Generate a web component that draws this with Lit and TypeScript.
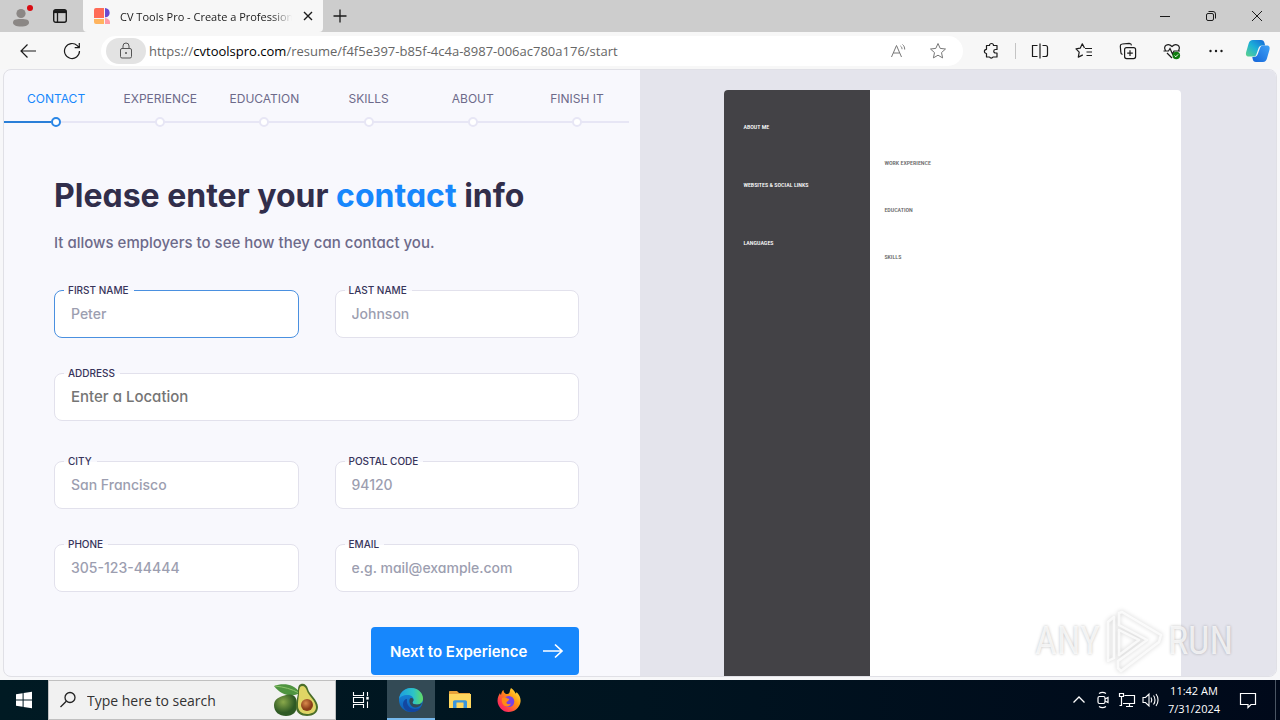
import { LitElement, html, css, svg } from "lit";
import { customElement, property } from "lit/decorators.js";
import { classMap } from "lit/directives/class-map.js";

const icon = (w: number, h: number, body: unknown) =>
  html`<svg width=${w} height=${h} viewBox="0 0 ${w} ${h}" fill="none" stroke="currentColor" aria-hidden="true">${body}</svg>`;

const icons = {
  profile: icon(24, 26, svg`
    <circle cx="11" cy="10.500" r="4.600" fill="#8b8785" stroke="none"/>
    <path d="M3 19.500c0-2.500 2-3.500 8-3.500s8 1 8 3.500-3 4-8 4-8-1.500-8-4z" fill="#8b8785" stroke="none"/>
    <circle cx="20" cy="5" r="3" fill="#d90b12" stroke="none"/>`),
  tabActions: icon(16, 16, svg`
    <rect x="1.7" y="1.7" width="12.6" height="12.6" rx="2" stroke-width="1.4"/>
    <path d="M2 3.6h12" stroke-width="3"/><path d="M5.5 4v10" stroke-width="1.3"/>`),
  favicon: icon(16, 16, svg`
    <g stroke="none"><path d="M0 2a2 2 0 0 1 2-2h8v10H0z" fill="#ff6b57"/>
    <path d="M0 11h10v5H2a2 2 0 0 1-2-2z" fill="#ffb45e"/>
    <path d="M11 0a5 4.700 0 0 1 1 9.200h-1z" fill="#6a4bd0"/>
    <path d="M11 10a5 5 0 0 1 5 6h-5z" fill="#ff9ba8"/></g>`),
  close: icon(12, 12, svg`<path d="M2 2l8 8M10 2l-8 8" stroke-width="1.4"/>`),
  plus: icon(16, 16, svg`<path d="M8 1.500v13M1.500 8h13" stroke-width="1.3"/>`),
  minimize: icon(12, 12, svg`<path d="M1 6.500h10"/>`),
  restore: icon(12, 12, svg`<rect x="1.500" y="3.500" width="7" height="7" rx="1.5"/><path d="M3.500 1.500h4.500a2.500 2.500 0 0 1 2.500 2.500v4.500"/>`),
  winClose: icon(12, 12, svg`<path d="M1 1l10 10M11 1L1 11"/>`),
  back: icon(18, 16, svg`<path d="M17 8H2M8.500 1.500L2 8l6.500 6.500" stroke-width="1.2"/>`),
  refresh: icon(18, 18, svg`<path d="M16.500 9A7.500 7.500 0 1 1 14.300 3.700L16 5.400M16.300 1v4.600h-4.600" stroke-width="1.2"/>`),
  lock: icon(14, 18, svg`<rect x="1.500" y="6.500" width="11" height="9.500" rx="1.500"/><path d="M4 6.500V4a3 3 0 0 1 6 0v2.500"/><circle cx="7" cy="11" r="1" fill="currentColor" stroke="none"/>`),
  readAloud: icon(18, 18, svg`<path d="M1.500 15L6.500 3.500l5 11.500M3.300 11h6.400"/><path d="M10.500 4c1 .8 1.500 1.800 1.500 3.200M12.500 2.500c1.500 1.200 2.200 2.800 2.200 5"/>`),
  star: icon(18, 18, svg`<path d="M9 1.500l2.200 4.900 5.300.6-4 3.600 1.100 5.300L9 13.200l-4.600 2.700 1.100-5.300-4-3.600 5.300-.6z" stroke-linejoin="round"/>`),
  extension: icon(18, 18, svg`<path d="M5 3.500h2.500a2 2 0 0 1 4 0H15v4h-1.500a1.700 1.700 0 0 0 0 3.500H15v4h-4a2 2 0 0 1-3.500 0H4.500v-3.500a2.100 2.100 0 0 1 0-4.200V3.500z" stroke-width="1.200" stroke-linejoin="round"/>`),
  split: icon(18, 18, svg`<path d="M6.500 3.500H1.500v11h5M11.500 3.500h3a2 2 0 0 1 2 2v7a2 2 0 0 1-2 2h-3M9 1.500v15" stroke-width="1.200"/>`),
  favorites: icon(18, 18, svg`<path d="M10 6.500h7M11.500 10H17M11.500 13.500H17M9.500 6L7.300 1.800 5.200 6.200l-4.200.6 3.200 3.300-.9 5 4.500-2.200" stroke-width="1.200" stroke-linejoin="round"/>`),
  collections: icon(18, 18, svg`<rect x="5.600" y="5.600" width="11" height="11" rx="2" stroke-width="1.200"/><path d="M11 8.300v5.600M8.200 11.100h5.600M3.500 12.500A2.500 2.500 0 0 1 1.800 10L1.300 4a2 2 0 0 1 1.900-2l7-.7a2.300 2.300 0 0 1 2.300 2" stroke-width="1.200"/>`),
  essentials: icon(18, 18, svg`<path d="M2.500 8.500C-.5 4 5 .5 9 4.500c4-4 9.500-.5 6.500 4M4 11l5 5M0.500 9h5l1.500-2.500L9.500 12l1.500-3h6" stroke-width="1.200"/><circle cx="13.300" cy="13.500" r="3.800" fill="#107c10" stroke="none"/><path d="M11.600 13.600l1.200 1.200 2.300-2.400" stroke="#fff"/>`),
  more: icon(18, 18, svg`<g fill="currentColor" stroke="none"><circle cx="3.500" cy="9" r="1.200"/><circle cx="9" cy="9" r="1.200"/><circle cx="14.500" cy="9" r="1.200"/></g>`),
  copilot: icon(26, 26, svg`
    <defs><linearGradient id="cp1" x1="0" y1="1" x2="1" y2="0"><stop stop-color="#5fd38a"/><stop offset=".5" stop-color="#1cb0d8"/><stop offset="1" stop-color="#1565d8"/></linearGradient>
    <linearGradient id="cp2" x1="0" y1="1" x2="1" y2="0"><stop stop-color="#1464d8"/><stop offset="1" stop-color="#3ea2f7"/></linearGradient></defs>
    <g stroke="none"><path d="M8 2h8c2 0 3 1 3.500 3l.6 2.500h-3c-2 0-3 1-3.700 3L11.500 16c-.6 2-1.500 2.500-3 2.500H4c-3 0-3.500-2-2.800-4.500l2.300-8C4.200 3.300 5.500 2 8 2z" fill="url(#cp1)"/>
    <path d="M18 24h-7c-2 0-3-1-3.300-3L7.300 19h1.500c2 0 3.300-1 4-3l2-5.500c.7-2 1.500-3 3.300-3h3.500c3 0 3.500 2 2.800 4.500l-2.300 8c-.7 2.700-1.900 4-4.100 4z" fill="url(#cp2)"/></g>`),
  arrow: icon(22, 16, svg`<path d="M1 8h19M13 1.500L20 8l-7 6.500" stroke-width="1.700"/>`),
  windows: icon(18, 18, svg`<g fill="#fff" stroke="none"><path d="M1 3.200l6.600-1v6.300H1zM8.600 2L17 .8v7.700H8.600zM1 9.500h6.600v6.300L1 14.800zM8.600 9.500H17v7.700L8.600 16z"/></g>`),
  search: icon(18, 18, svg`<circle cx="11" cy="6.500" r="5" stroke-width="1.300"/><path d="M7.300 10.200L1.500 16" stroke-width="1.300"/>`),
  avocado: icon(46, 36, svg`
    <defs><radialGradient id="av" cx=".4" cy=".35"><stop stop-color="#8aa94b"/><stop offset="1" stop-color="#2f5a24"/></radialGradient>
    <radialGradient id="pit" cx=".4" cy=".35"><stop stop-color="#d98a4c"/><stop offset="1" stop-color="#8a3d18"/></radialGradient></defs>
    <g stroke="none"><path d="M1 4c8-3 20-3 26 7-9 5-19 2-26-7z" fill="#4f9440"/><path d="M2 4c9 1 17 3 24 7" stroke="#8ec46c" fill="none"/>
    <path d="M13 13c7-2 11 1 11 10 0 7-4 11-11 11S1 30 1 23c0-6 5-8 12-10z" fill="url(#av)"/>
    <path d="M28 2c3-1 6 1 7 5 1 5 10 11 10 18 0 6-5 9-11 9s-11-3-11-9c0-8 2-10 2-15 0-4 0-7 3-8z" fill="#4b6f2a"/>
    <path d="M29 4c3 0 4 2 5 5 1 4 9 10 9 16 0 5-4 7-9 7s-9-3-9-8c0-7 1-9 1-14 0-3 1-6 3-6z" fill="#dfd565"/>
    <circle cx="34" cy="23" r="6" fill="url(#pit)"/></g>`),
  taskView: icon(18, 18, svg`<path d="M1.500 1v3.500h10V1M1.500 17v-3.500h10V17M1.500 6.500h10v5h-10zM15.500 1v4M15.500 10.500V17" stroke-width="1.100"/><path d="M14.300 5.800h2.400v2.800h-2.400z" fill="#fff" stroke="none"/>`),
  edge: icon(26, 26, svg`
    <defs><linearGradient id="e1" x1="0" x2="1"><stop stop-color="#1c9de0"/><stop offset=".6" stop-color="#2cc3c8"/><stop offset="1" stop-color="#63dc62"/></linearGradient>
    <linearGradient id="e2" x1="0" y1="0" x2="0" y2="1"><stop stop-color="#1b8fe0"/><stop offset="1" stop-color="#0c5cb5"/></linearGradient></defs>
    <g stroke="none"><circle cx="13" cy="13" r="12" fill="url(#e2)"/>
    <path d="M1 12C2 5 7 1 13 1c7 0 12 5 12 10.500 0 4-3 6-6.500 6-3 0-4-1-4-2 0-.8 1-1.200 1-3C15.500 10 13 8 9.500 8 5 8 2 10 1 12z" fill="url(#e1)"/>
    <path d="M9 12c-1 6 3 10 8 10 3 0 5-1 6.500-2-1.500 3-5.500 5-9.500 5C8 25 5 21 5 17c0-3 2-5 4-5z" fill="#1347a0"/>
    <path d="M12 11.500c2-1 3.500 0 3.500 1.500s-1 1.700-1 2.500c0 2 5 3 9.500.5-1.500 3.500-4.500 4.500-7 4.500-4 0-7-6-5-9z" fill="#334a55"/></g>`),
  folder: icon(24, 24, svg`
    <g stroke="none"><path d="M1 4c0-.6.4-1 1-1h7l2 2h11v3H1z" fill="#e8a33a"/><path d="M1 6h22v14H1z" fill="#ffd75e"/>
    <path d="M5 20v-6c0-1 .7-1.700 1.700-1.700h10.600c1 0 1.700.7 1.700 1.700v6h-3.500v-3.500h-7V20z" fill="#3a96dd"/><path d="M8.500 14.500h7V17h-7z" fill="#ffd75e"/></g>`),
  firefox: icon(26, 26, svg`
    <defs><linearGradient id="ff" x1="1" y1="0" x2="0" y2="1"><stop stop-color="#fff44f"/><stop offset=".4" stop-color="#ff980e"/><stop offset=".75" stop-color="#ff3750"/><stop offset="1" stop-color="#f0147a"/></linearGradient></defs>
    <g stroke="none"><path d="M15 1c3 2 4 4 4.500 5.500 1-.3 1-1.500 1-1.500 3 3 4.500 6 4 10-1 6-6 10-12 10C6.500 25 2 20 1.500 14c0-4 1.500-6 2.500-8 .3 1 .5 1.500 1 2C5.500 5.500 6 4 7.500 3c0 2 1 3 2.500 4 2 0 3-.5 3.500-1.500.5-1.500.5-3 1.500-4.500z" fill="url(#ff)"/>
    <circle cx="12.800" cy="14.500" r="5.500" fill="#7542e5"/><path d="M6 11c2-1 4-1 5.500.5 1.500.2 2 .6 1.500 1.500-1 1.500-3 1.500-2.500 3 .6 1.500 3 1.500 4.500.5-1 3-5 4-7.500 1.500C6 16.500 5.500 13.500 6 11z" fill="#ff8a16"/></g>`),
  chevron: icon(14, 14, svg`<path d="M1.500 9.500L7 4l5.500 5.500" stroke-width="1.300"/>`),
  meet: icon(16, 18, svg`<rect x="3" y="5.500" width="7" height="7" rx="1.500" stroke-width="1.200"/><path d="M10 8l3-1.500v5L10 10M4 2.500c2-1.300 5-1.300 7 0M4 15.500c2 1.300 5 1.300 7 0" stroke-width="1.200"/>`),
  network: icon(18, 16, svg`<path d="M6.500 3.500h10v8H5M8 14.500h7M11.500 11.500v3M1.500 1.500h4v3h-4zM3.500 4.500v9h-2" stroke-width="1.200"/>`),
  volume: icon(18, 16, svg`<path d="M1 5.500h2.500L7 2v12l-3.500-3.500H1zM9 5.500c1 1.500 1 3.500 0 5M11.500 3.500c2 2.500 2 6.500 0 9M14 2c2.700 3.500 2.700 8.500 0 12" stroke-width="1.100"/>`),
  notification: icon(18, 18, svg`<path d="M1.500 2.500h15v11H12l-3 3v-3H1.500z" stroke-width="1.200"/>`),
};

@customElement("browser-chrome")
class BrowserChrome extends LitElement {
  static styles = css`
    :host { display: block; flex: none; font-family: "Open Sans", "Noto Sans", sans-serif; color: #1b1b1b; }
    svg { display: block; flex: none; }
    button { display: flex; align-items: center; justify-content: center; flex: none; padding: 0; border: 0; background: none; color: inherit; font: inherit; }
    .tabs { display: flex; height: 32px; background: #cdcdcd; }
    .profile { width: 44px; }
    .actions { width: 32px; }
    .tab { display: flex; align-items: center; width: 240px; margin-left: 7px; padding: 0 9px 0 11px; box-sizing: border-box; background: #f7f7f7; border-radius: 0 0 4px 4px; gap: 10px; font-size: 11px; }
    .title { flex: 1; min-width: 0; white-space: nowrap; mask-image: linear-gradient(90deg, #000 88%, transparent); }
    .new { width: 34px; }
    .space { flex: 1; }
    .win { width: 46px; }
    .bar { display: flex; align-items: center; height: 37px; padding-right: 2px; background: #f7f7f7; }
    .back { width: 56px; }
    .reload { width: 32px; }
    .address { display: flex; align-items: center; flex: 1; min-width: 0; height: 30px; margin: 0 6px 0 13px; padding: 0 6px 0 5px; box-sizing: border-box; border-radius: 15px; background: #fff; color: #777; }
    .lock { width: 40px; height: 26px; border-radius: 13px; background: #e3e3e3; color: #555; }
    .url { flex: 1; min-width: 0; margin-left: 3px; overflow: hidden; color: #666; font-size: 13px; text-decoration: none; white-space: nowrap; }
    .host { color: #000; }
    .inner { width: 39px; }
    .tool { width: 44px; }
    .sep { width: 1px; height: 16px; margin: 0 2px; background: #c4c4c4; }
    .pilot { width: 40px; }
  `;
  render() {
    return html`
      <div class="tabs">
        <button class="profile" aria-label="Profile">${icons.profile}</button>
        <button class="actions" aria-label="Tab actions">${icons.tabActions}</button>
        <div class="tab">${icons.favicon}<span class="title">CV Tools Pro - Create a Profession</span>
          <button aria-label="Close tab">${icons.close}</button></div>
        <button class="new" aria-label="New tab">${icons.plus}</button>
        <div class="space"></div>
        <button class="win" aria-label="Minimize">${icons.minimize}</button>
        <button class="win" aria-label="Restore">${icons.restore}</button>
        <button class="win" aria-label="Close">${icons.winClose}</button>
      </div>
      <div class="bar">
        <button class="back" aria-label="Back">${icons.back}</button>
        <button class="reload" aria-label="Refresh">${icons.refresh}</button>
        <div class="address">
          <button class="lock" aria-label="Site information">${icons.lock}</button>
          <a class="url" href="#">https://<span class="host">cvtoolspro.com</span>/resume/f4f5e397-b85f-4c4a-8987-006ac780a176/start</a>
          <button class="inner" aria-label="Read aloud">${icons.readAloud}</button>
          <button class="inner" aria-label="Add to favorites">${icons.star}</button>
        </div>
        <button class="tool" aria-label="Extensions">${icons.extension}</button>
        <div class="sep"></div>
        <button class="tool" aria-label="Split screen">${icons.split}</button>
        <button class="tool" aria-label="Favorites">${icons.favorites}</button>
        <button class="tool" aria-label="Collections">${icons.collections}</button>
        <button class="tool" aria-label="Browser essentials">${icons.essentials}</button>
        <button class="tool" aria-label="More">${icons.more}</button>
        <button class="pilot" aria-label="Copilot">${icons.copilot}</button>
      </div>`;
  }
}

@customElement("step-nav")
class StepNav extends LitElement {
  static styles = css`
    :host { display: block; }
    .steps { display: grid; grid-template-columns: repeat(6, 1fr); margin: 0; padding: 20px 0 0; list-style: none; background: linear-gradient(#e7e6f5, #e7e6f5) 0 51px / 100% 2px no-repeat; }
    .step { display: flex; flex-direction: column; align-items: center; gap: 9px; }
    .link { color: #6d6a8a; font-size: 12px; line-height: 18px; text-decoration: none; }
    .track { display: flex; align-items: center; width: 100%; }
    .half { flex: 1; height: 2px; }
    .dot { width: 6px; height: 6px; border: 2px solid #e7e6f5; border-radius: 50%; background: #fff; }
    .current .link { color: #1787fc; }
    .current .dot { border-color: #2a86e6; }
    .current .before { background: #2a7fd8; }
  `;
  render() {
    const steps = ["CONTACT", "EXPERIENCE", "EDUCATION", "SKILLS", "ABOUT", "FINISH IT"];
    return html`<ol class="steps">${steps.map((s, i) => html`
      <li class=${classMap({ step: true, current: i === 0 })}>
        <a class="link" href="#">${s}</a>
        <span class="track"><span class="half before"></span><span class="dot"></span><span class="half"></span></span>
      </li>`)}</ol>`;
  }
}

@customElement("text-field")
class TextField extends LitElement {
  @property() label = "";
  @property() hint = "";
  @property({ type: Boolean }) active = false;
  @property({ type: Boolean }) dark = false;
  static styles = css`
    :host { display: block; position: relative; }
    .label { position: absolute; left: 10px; top: -8px; padding: 0 5px 0 4px; background: linear-gradient(#f8f8fd 55%, #fff 55%); color: #37345a; font-size: 10px; font-weight: 500; line-height: 16px; }
    .input { display: block; width: 100%; height: 48px; box-sizing: border-box; padding: 0 16px 2px; border: 1px solid #e2e1ec; border-radius: 8px; outline: 0; background: #fff; color: #37345a; font-family: inherit; font-size: 14px; font-weight: 500; font-feature-settings: inherit; }
    .input::placeholder { color: #9c9eb0; opacity: 1; }
    .dark { font-size: 15px; }
    .dark::placeholder { color: #757575; }
    .active { border-color: #4a90e0; }
  `;
  render() {
    return html`<input id="box" class=${classMap({ input: true, active: this.active, dark: this.dark })} placeholder=${this.hint}>
      <label class="label" for="box">${this.label}</label>`;
  }
}

@customElement("contact-form")
class ContactForm extends LitElement {
  static styles = css`
    :host { display: block; }
    .form { display: flex; flex-direction: column; padding: 47px 50px 0; }
    .heading { margin: 0; color: #312e4b; font-size: 32px; font-weight: 700; line-height: 44px; }
    .accent { color: #1787fc; }
    .lead { margin: 15px 0 37px; color: #6d6a8a; font-size: 15px; font-weight: 500; line-height: 20px; }
    .fields { display: grid; grid-template-columns: 1fr 1fr; gap: 35px 36px; }
    .wide { grid-column: 1 / -1; margin-bottom: 5px; }
    .next { display: flex; align-items: center; justify-content: space-between; align-self: flex-end; width: 208px; height: 48px; margin-top: 35px; padding: 0 15px 0 19px; border: 0; border-radius: 4px; background: #1787fc; color: #fff; font: inherit; font-size: 15px; font-weight: 600; font-feature-settings: inherit; }
  `;
  render() {
    return html`<form class="form">
      <h1 class="heading">Please enter your <span class="accent">contact</span> info</h1>
      <p class="lead">It allows employers to see how they can contact you.</p>
      <div class="fields">
        <text-field label="FIRST NAME" hint="Peter" active></text-field>
        <text-field label="LAST NAME" hint="Johnson"></text-field>
        <text-field class="wide" label="ADDRESS" hint="Enter a Location" dark></text-field>
        <text-field label="CITY" hint="San Francisco"></text-field>
        <text-field label="POSTAL CODE" hint="94120"></text-field>
        <text-field label="PHONE" hint="305-123-44444"></text-field>
        <text-field label="EMAIL" hint="e.g. mail@example.com"></text-field>
      </div>
      <button class="next" type="button">Next to Experience ${icons.arrow}</button>
    </form>`;
  }
}

@customElement("resume-preview")
class ResumePreview extends LitElement {
  static styles = css`
    :host { display: flex; justify-content: center; padding: 20px 11px 0 0; box-sizing: border-box; background: #e4e4ec; }
    .sheet { display: grid; grid-template-columns: 32% 68%; width: 73%; overflow: hidden; border-radius: 4px 4px 0 0; background: #fff; font-family: "Liberation Sans Narrow", "Roboto Condensed", "Roboto", sans-serif; }
    .side { display: flex; flex-direction: column; gap: 48px; padding: 32px 19px; background: #434246; color: #fff; }
    .body { display: flex; flex-direction: column; gap: 37px; padding: 68px 14px; color: #666; }
    .head { margin: 0; font-size: 6px; font-weight: 500; line-height: 10px; white-space: nowrap; }
  `;
  render() {
    const heads = (items: string[]) => items.map((t) => html`<h2 class="head">${t}</h2>`);
    return html`<div class="sheet">
      <div class="side">${heads(["ABOUT ME", "WEBSITES & SOCIAL LINKS", "LANGUAGES"])}</div>
      <div class="body">${heads(["WORK EXPERIENCE", "EDUCATION", "SKILLS"])}</div>
    </div>`;
  }
}

@customElement("task-bar")
class TaskBar extends LitElement {
  static styles = css`
    :host { display: flex; flex: none; height: 40px; background: linear-gradient(90deg, #001a23, #001420 50%, #00091a); color: #fff; font-family: "Open Sans", "Noto Sans", sans-serif; }
    svg { display: block; flex: none; }
    button { display: flex; align-items: center; justify-content: center; flex: none; box-sizing: border-box; padding: 0; border: 0; background: none; color: inherit; font: inherit; }
    .start { width: 48px; }
    .search { display: flex; align-items: center; width: 288px; box-sizing: border-box; padding: 0 16px 0 10px; gap: 10px; border: 1px solid #c0c0c0; background: #f1f1f1; color: #222; }
    .query { flex: 1; min-width: 0; padding: 0; border: 0; outline: 0; background: none; font: inherit; font-size: 14px; }
    .query::placeholder { color: #333; opacity: 1; }
    .apps { display: flex; gap: 1px; }
    .view { width: 50px; }
    .app { width: 48px; }
    .open { background: #334a55; border-top: 2px solid #334a55; border-bottom: 2px solid #76b9ed; }
    .space { flex: 1; }
    .tray { width: 24px; }
    .clock { width: 62px; flex-direction: column; font-size: 11px; line-height: 18px; white-space: nowrap; }
    .note { width: 45px; margin-right: 5px; }
    .peek { width: 5px; box-sizing: border-box; border-left: 1px solid #4a5563; }
  `;
  render() {
    return html`
      <button class="start" aria-label="Start">${icons.windows}</button>
      <label class="search">${icons.search}<input class="query" aria-label="Search" placeholder="Type here to search">${icons.avocado}</label>
      <div class="apps">
        <button class="view" aria-label="Task view">${icons.taskView}</button>
        <button class="app open" aria-label="Edge">${icons.edge}</button>
        <button class="app" aria-label="File Explorer">${icons.folder}</button>
        <button class="app" aria-label="Firefox">${icons.firefox}</button>
      </div>
      <div class="space"></div>
      <button class="tray" aria-label="Show hidden icons">${icons.chevron}</button>
      <button class="tray" aria-label="Meet now">${icons.meet}</button>
      <button class="tray" aria-label="Network">${icons.network}</button>
      <button class="tray" aria-label="Volume">${icons.volume}</button>
      <button class="clock"><span>11:42 AM</span><span>7/31/2024</span></button>
      <button class="note" aria-label="Notifications">${icons.notification}</button>
      <div class="peek"></div>`;
  }
}

@customElement("app-root")
class AppRoot extends LitElement {
  static styles = css`
    :host { display: flex; flex-direction: column; position: relative; height: 100vh; overflow: hidden; background: #f7f7f9; }
    .page { display: grid; grid-template-columns: 1fr 1fr; flex: 1; min-height: 0; margin: 0 3px 3px; overflow: hidden; border: 1px solid #e0e0e6; border-radius: 8px; background: #f8f8fd; font-family: Inter, sans-serif; font-feature-settings: "cv11"; }
    .left { min-width: 0; padding-right: 11px; overflow: hidden; }
    .mark { position: absolute; right: 47px; bottom: 47px; display: flex; align-items: center; gap: 4px; color: rgba(255, 255, 255, 0.75); font-family: "Liberation Sans Narrow", "Roboto Condensed", Roboto, sans-serif; font-size: 38px; line-height: 64px; text-shadow: 0 0 3px rgba(0, 0, 0, 0.25); pointer-events: none; }
    .logo { display: block; filter: drop-shadow(0 0 2px rgba(0, 0, 0, 0.25)); }
  `;
  render() {
    return html`
      <browser-chrome></browser-chrome>
      <main class="page">
        <section class="left"><step-nav></step-nav><contact-form></contact-form></section>
        <resume-preview></resume-preview>
      </main>
      <task-bar></task-bar>
      <div class="mark"><span>ANY</span>
        <svg class="logo" width="60" height="64" viewBox="0 0 60 64" fill="none" stroke="#fff" stroke-opacity=".75" stroke-width="2.500" stroke-linejoin="round">
          <path d="M15 4l3-1 39 23-2 7L17 62l-3-3v-7l29-21L15 16z"/><path d="M15 21l20 10-20 15z"/><path d="M4 52V13l6-5v41z"/>
        </svg><span>RUN</span></div>`;
  }
}
